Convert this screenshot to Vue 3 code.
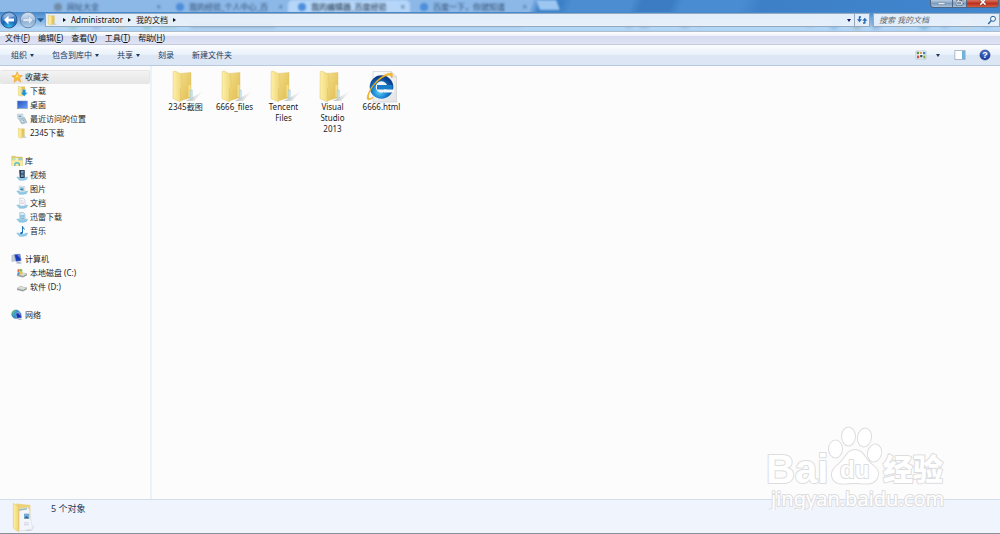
<script setup>
import { ref } from 'vue'

const keyword = ref('')

const tabs = [
  { title: '网址大全', tone: 'gray' },
  { title: '我的经验_个人中心_百', tone: 'blue' },
  { title: '我的编辑器_百度经验', tone: 'blue', active: true },
  { title: '百度一下，你就知道', tone: 'blue' }
]
const menus = [
  { text: '文件', key: 'F' },
  { text: '编辑', key: 'E' },
  { text: '查看', key: 'V' },
  { text: '工具', key: 'T' },
  { text: '帮助', key: 'H' }
]
const commands = [
  { text: '组织', drop: true },
  { text: '包含到库中', drop: true },
  { text: '共享', drop: true },
  { text: '刻录' },
  { text: '新建文件夹' }
]
const groups = [
  {
    name: '收藏夹', icon: 'star', selected: true,
    items: [
      { name: '下载', icon: 'download' },
      { name: '桌面', icon: 'desktop' },
      { name: '最近访问的位置', icon: 'recent' },
      { name: '2345下载', icon: 'minifolder' }
    ]
  },
  {
    name: '库', icon: 'library',
    items: [
      { name: '视频', icon: 'video' },
      { name: '图片', icon: 'picture' },
      { name: '文档', icon: 'document' },
      { name: '迅雷下载', icon: 'thunder' },
      { name: '音乐', icon: 'music' }
    ]
  },
  {
    name: '计算机', icon: 'computer',
    items: [
      { name: '本地磁盘 (C:)', icon: 'diskc' },
      { name: '软件 (D:)', icon: 'diskd' }
    ]
  },
  { name: '网络', icon: 'network', items: [] }
]
const files = [
  { name: '2345截图', icon: 'folder' },
  { name: '6666_files', icon: 'folder' },
  { name: 'Tencent Files', icon: 'folder' },
  { name: 'Visual Studio 2013', icon: 'folder' },
  { name: '6666.html', icon: 'ie' }
]
</script>

<template>
  <div class="window">
    <svg class="defs" aria-hidden="true">
      <defs>
        <linearGradient id="gFront" x1="0" x2="1"><stop offset="0" stop-color="#fdf0a9" /><stop offset="1" stop-color="#efd676" /></linearGradient>
        <linearGradient id="gBack" x1="0" x2="1" y2="1"><stop offset="0" stop-color="#f3dc88" /><stop offset="1" stop-color="#dfbd50" /></linearGradient>
        <linearGradient id="gShade" x1="0" x2="1"><stop offset="0" stop-color="#8d8d8d" stop-opacity=".6" /><stop offset="1" stop-color="#bbb" stop-opacity="0" /></linearGradient>
        <radialGradient id="gIe" cx=".4" cy=".75" r=".8"><stop offset="0" stop-color="#5fd3fb" /><stop offset=".5" stop-color="#1b86d3" /><stop offset="1" stop-color="#0b3f8e" /></radialGradient>
        <linearGradient id="gPage" x1="0" x2="1" y2="1"><stop offset="0" stop-color="#fff" /><stop offset="1" stop-color="#e2e2e6" /></linearGradient>
        <radialGradient id="gBackBtn" cx=".5" cy=".95" r=".9"><stop offset="0" stop-color="#37c3f5" /><stop offset=".5" stop-color="#1b63b5" /><stop offset="1" stop-color="#6f9fd8" /></radialGradient>
        <linearGradient id="gFwdBtn" x2="0" y2="1"><stop offset="0" stop-color="#d5e3f3" /><stop offset=".48" stop-color="#a9c4e2" /><stop offset=".52" stop-color="#86a9d0" /><stop offset="1" stop-color="#b7d2ed" /></linearGradient>
        <radialGradient id="gHelp" cx=".5" cy=".3" r=".7"><stop offset="0" stop-color="#5b83d8" /><stop offset="1" stop-color="#142f96" /></radialGradient>
        <linearGradient id="gScreen" x1="0" x2="1" y2="1"><stop offset="0" stop-color="#2450bd" /><stop offset="1" stop-color="#69a0f4" /></linearGradient>
      </defs>
      <symbol id="i-star" viewBox="0 0 12 12">
        <path d="M6.2.8 7.6 4.4 11.4 4.6 8.5 7 9.8 11 6.3 8.800 3 11.2 3.8 7.2.8 4.9 4.7 4.5Z" fill="#fcc12f" stroke="#ee9a2c" stroke-width=".6" />
        <path d="M6.1 2.4 6.9 5 9.2 5.1 5 6.2Z" fill="#ffe98b" />
      </symbol>
      <symbol id="i-minifolder" viewBox="0 0 12 12">
        <path d="M5 1.6h3.6v8.8H4.5Z" fill="#e2c464" />
        <path d="M2.4 1 5.8 2.6V11.4L2.4 10.2Z" fill="#fae896" stroke="#e3c863" stroke-width=".4" />
        <path d="M8.5 9 11 10.8H6Z" fill="#c8c8c8" />
        <path d="M7.7 8.1h1v2.4h-1z" fill="#bcd4e3" />
      </symbol>
      <symbol id="i-download" viewBox="0 0 12 12">
        <path d="M5 1.6h4v8.8H4.5Z" fill="#e2c464" />
        <path d="M2.4 1 5.8 2.6V11.4L2.4 10.2Z" fill="#fae896" stroke="#e3c863" stroke-width=".4" />
        <path d="M6.600 4.800h3v3h1.800L8.200 11.300 5 7.800H6.600Z" fill="#1993d8" stroke="#86c9ea" stroke-width=".3" />
      </symbol>
      <symbol id="i-desktop" viewBox="0 0 12 12">
        <path d="M1.4 2h10v7.500h-10z" fill="url(#gScreen)" stroke="#7697d4" stroke-width=".6" />
        <path d="M1.400 9h10v1h-10z" fill="#a0afc6" /><path d="M1.600 9h1v.8h-1z" fill="#438661" />
      </symbol>
      <symbol id="i-recent" viewBox="0 0 12 12">
        <path d="M1.4 1.4 6.7 1 7 5.5 2 6Z" fill="#e9f0f5" stroke="#91a6b5" stroke-width=".5" />
        <path d="M2.5 2.5h3v1.8h-3z" fill="#6f9fc6" />
        <path d="M3 6.2 8.4 4.2 11 9.5 5.8 11Z" fill="#c9dbe5" stroke="#8da2b0" stroke-width=".5" />
        <circle cx="7" cy="7.8" r="2" fill="#eff8fb" stroke="#5c8498" stroke-width=".5" /><path d="M7 6.4V8h1.2" fill="none" stroke="#234d70" stroke-width=".5" />
      </symbol>
      <symbol id="i-library" viewBox="0 0 12 12">
        <path d="M.8 1.2H4L5 2.1h6.4v8.5H.8Z" fill="#e3c65e" stroke="#cdb157" stroke-width=".4" />
        <path d="M1.5 2.6h3v4h-3z" fill="#bce6b1" /><path d="M4.5 3h3v4h-3z" fill="#eff6cc" /><path d="M7.5 3.2h3v3h-3z" fill="#8cd1dc" />
        <path d="M.7 5.400h10.800v5.500H.7Z" fill="#faed9e" />
        <path d="M3.2 11V8.500Q3.500 7 6 7T9 8.500V11H7.600V9Q6 8 4.600 9V11Z" fill="#61b9d1" />
      </symbol>
      <symbol id="i-tray" viewBox="0 0 12 12">
        <path d="M.8 8.100Q3 7.600 4.200 9.200H8Q9.200 7.800 11.600 8.300L10.400 10.500 7.700 11.300H3.500Z" fill="#8fcdea" stroke="#5fa7cc" stroke-width=".4" />
      </symbol>
      <symbol id="i-video" viewBox="0 0 12 12">
        <use href="#i-tray" /><path d="M3 1h5.800v8h-5z" fill="#28364b" /><path d="M5 1.8h2.6v2.6H5zM5 5.4h2.6V8H5z" fill="#639ac7" />
        <path d="M3.800 1v8M8.3 1v8" stroke="#b5c0cc" stroke-width=".5" stroke-dasharray=".7 .7" />
      </symbol>
      <symbol id="i-picture" viewBox="0 0 12 12">
        <use href="#i-tray" /><path d="M3.3 3 9 3.6 8.7 8.8 2.9 8.2Z" fill="#f4f9fa" stroke="#a6bdcb" stroke-width=".5" />
        <path d="M4 4.1 8 4.4 7.8 7.8 3.7 7.3Z" fill="#8cc3df" /><path d="m4 7.1 1.6-1.8 2.2 2.3Z" fill="#477890" />
      </symbol>
      <symbol id="i-document" viewBox="0 0 12 12">
        <use href="#i-tray" /><path d="M3.7 1.2h3.7L9 3v6H3.7Z" fill="#fafafd" stroke="#a9b3c6" stroke-width=".5" />
        <path d="M4.7 3.5h2M4.7 5h3.2M4.7 6.5h3.2" stroke="#aab7cf" stroke-width=".5" />
      </symbol>
      <symbol id="i-thunder" viewBox="0 0 12 12">
        <use href="#i-tray" /><path d="M3.7 1.5h3.5L9 3v6H3.7Z" fill="#d4e9f4" stroke="#85abc6" stroke-width=".5" />
        <path d="M4.4 4h3.9v4.3H4.4z" fill="#77b9dc" /><path d="M5 5h2.7M5 6.5h2.7" stroke="#e7f5fb" stroke-width=".5" />
      </symbol>
      <symbol id="i-music" viewBox="0 0 12 12">
        <use href="#i-tray" /><path d="M6 1.2h1q.3 1.5 2 3-.6 1-1-.1L7 3.6v4.2Q6.7 9.3 5 9.2 3.5 8.7 4.2 7.6 5 6.8 6 7.1Z" fill="#1271c2" />
      </symbol>
      <symbol id="i-computer" viewBox="0 0 12 12">
        <path d="M.9 2.4 3.5 1.6V8L.9 8.5Z" fill="#c6ced7" stroke="#8d9dad" stroke-width=".4" />
        <path d="M3.5 1.4 9 1.1 10.2 7.7 4.8 8.4Z" fill="#183bbd" stroke="#8c9cc3" stroke-width=".5" />
        <path d="M6 1.4 9 1.2 8.7 5Z" fill="#798edc" />
        <path d="m6 8.7 3-.3.2 1.1 2.1.2-1.8 1.1-4.2-.4Z" fill="#adb6c2" />
      </symbol>
      <symbol id="i-diskbase" viewBox="0 0 12 12">
        <path d="M1 7.3 4.4 5.3 11 6.7v1.6L7.1 10.4 1 8.9Z" fill="#9b9f9f" />
        <path d="M1 7.3 4.4 5.3 11 6.7 7.2 8.9Z" fill="#dedfdb" stroke="#a9adab" stroke-width=".3" /><circle cx="8.9" cy="8.5" r=".6" fill="#53bd66" />
      </symbol>
      <symbol id="i-diskd" viewBox="0 0 12 12"><use href="#i-diskbase" /></symbol>
      <symbol id="i-diskc" viewBox="0 0 12 12">
        <use href="#i-diskbase" />
        <path d="M1.5 2.5 3.6 2v2.7l-2.1.4Z" fill="#e1623a" /><path d="m4 2 2.3.5v2.3L4 4.6Z" fill="#76b646" />
        <path d="m1.5 5.5 2.1-.4v2.4l-2.1.4Z" fill="#408fd3" /><path d="m4 5 2.3.1v2.5L4 7.5Z" fill="#efc43d" />
      </symbol>
      <symbol id="i-network" viewBox="0 0 12 12">
        <circle cx="5" cy="5.2" r="4.3" fill="#3494cb" stroke="#286c9d" stroke-width=".4" />
        <path d="M1.3 4Q2.4.8 5.2 1.3L4.3 3.2 2.6 4 3.2 7Q1 6.6 1.3 4Z" fill="#5fbd72" />
        <path d="m4.7 4.2 5.2-.4.9 5-5 .6Z" fill="#1735ae" stroke="#c0cadf" stroke-width=".5" />
        <path d="m7.2 4.3 2.3-.2.1 3Z" fill="#8298df" /><path d="m6.5 10 3.3-.5 1.5 1-3 .6Z" fill="#a6b1bf" />
      </symbol>
      <symbol id="i-folder" viewBox="0 0 36 34">
        <path d="M18 31 36 20.500 26 31Z" fill="url(#gShade)" />
        <path d="M12 3.400 23 2.500 23 27.500 12 31Z" fill="url(#gBack)" stroke="#dcc165" stroke-width=".4" />
        <path d="M20.5 15h2.1v12h-2.1z" fill="#f4e18b" />
        <path d="M5.2 1.5 7 1 13.7 4.5 14 17 12.4 18.5V31.8L5 28.6Z" fill="url(#gFront)" stroke="#e0c566" stroke-width=".5" />
        <path d="M22.3 20h2v8.500l-2 .5z" fill="#cfe5ee" stroke="#8eb8ca" stroke-width=".4" />
      </symbol>
      <symbol id="i-ie" viewBox="0 0 36 34">
        <path d="M9 1.500h18l5.500 5.500V32H9Z" fill="url(#gPage)" stroke="#c7c7cb" stroke-width=".6" />
        <path d="M27 1.500v5.500h5.500Z" fill="#ededf0" stroke="#c1c1c5" stroke-width=".5" />
        <circle cx="17.500" cy="17" r="8.800" fill="none" stroke="url(#gIe)" stroke-width="6" />
        <path d="M13 15h15.500v4.500H13Z" fill="#197cc9" /><path d="M20 19.500H30v3H20Z" fill="#f6f6f7" />
        <path d="M5.500 29.500Q2.500 31 3.500 25.500 6 17.500 13.500 10 22 2.500 27.500 3.200 29.300 4 27.800 8 27.600 5 25 5 18 6 9.500 15.500 3.500 24 4.600 28.300 5.500 29.500 9 27.500 7 29.300 5.500 29.500Z" fill="#f8ba20" stroke="#e9a21b" stroke-width=".6" />
      </symbol>
    </svg>

    <header class="glass">
      <div class="backdrop" aria-hidden="true">
        <div class="tabs">
          <div v-for="t in tabs" :key="t.title" class="tab" :class="{ active: t.active }">
            <i class="dot" :class="t.tone"></i><span class="tabname">{{ t.title }}</span><b>×</b>
          </div>
          <i class="newtab"></i>
        </div>
      </div>
      <svg class="haze left" viewBox="0 0 700 20" aria-hidden="true">
        <circle cx="73" cy="14" r="4" fill="#68ba91" /><circle cx="96" cy="14" r="4" fill="#938fdc" />
        <circle cx="121" cy="14" r="4" fill="#d9bd85" /><circle cx="147" cy="14" r="4" fill="#5fb990" />
        <path d="M160 14h17" stroke="#6fb793" stroke-width="4" /><path d="M191 14h84" stroke="#56697c" stroke-width="4" stroke-dasharray="4 1" />
        <path d="M277 14h244" stroke="#8da5bd" stroke-width="3" stroke-dasharray="5 2" />
        <path d="M626 14h6m8 0h9m32 0h8m10 0h55" stroke="#798ea5" stroke-width="4" />
      </svg>
      <svg class="haze right" viewBox="0 0 200 20" aria-hidden="true">
        <circle cx="10" cy="13" r="4" fill="#9cbcd7" /><circle cx="34" cy="13" r="5" fill="#65a4d8" /><circle cx="57" cy="13" r="5" fill="#8e9b8b" />
        <circle cx="76" cy="13" r="5" fill="#6a8bc0" /><path d="m98 16 9-8" stroke="#e2b779" stroke-width="3" /><circle cx="124" cy="13" r="5" fill="#4696bb" />
        <circle cx="145" cy="12" r="5" fill="#83a9de" /><circle cx="166" cy="12" r="5" fill="#dfcd9e" /><circle cx="187" cy="13" r="4" fill="#78b3e5" />
      </svg>
      <div class="winbuttons">
        <button aria-label="最小化"><svg viewBox="0 0 22 8"><path d="M7 3.2h8v2H7z" fill="#fff" stroke="#4f6278" stroke-width=".5" /></svg></button>
        <button aria-label="还原"><svg viewBox="0 0 14 8"><path d="M4 1.500h5v4H4zM6 1.300V-.5h5v4H9" fill="none" stroke="#465a72" stroke-width="2" /><path d="M4 1.500h5v4H4zM6 1.300V-.5h5v4H9" fill="none" stroke="#fff" /></svg></button>
        <button class="close" aria-label="关闭"><svg viewBox="0 0 30 8"><path d="m12.500-1 6 6.500m0-6.500-6 6.500" stroke="#733" stroke-width="3" /><path d="m12.500-1 6 6.500m0-6.500-6 6.500" stroke="#fff" stroke-width="1.800" /></svg></button>
      </div>
      <div class="address-row">
        <div class="nav">
          <button aria-label="后退"><svg viewBox="0 0 18 18"><circle cx="9" cy="9" r="8" fill="url(#gBackBtn)" stroke="#315b91" /><path d="M3.5 5Q9-.3 14.5 5 9 8 3.5 9Z" fill="#fff" opacity=".35" /><path d="M4 9 8.5 4.5v3H14v3H8.5v3Z" fill="#fff" /></svg></button>
          <button aria-label="前进"><svg viewBox="0 0 18 18"><circle cx="9" cy="9" r="7.8" fill="url(#gFwdBtn)" stroke="#6d88ac" /><path d="M14 9 9.5 4.5v3H4v3h5.5v3Z" fill="#dce7f3" stroke="#91abc9" stroke-width=".5" /></svg></button>
          <button class="history" aria-label="最近浏览的位置"><svg viewBox="0 0 6 6"><path d="M0 1h6L3 4.5Z" fill="#1d5d9a" /></svg></button>
        </div>
        <div class="address">
          <svg class="ico"><use href="#i-minifolder" /></svg>
          <i class="sep"></i><a href="#admin">Administrator</a>
          <i class="sep"></i><a href="#docs">我的文档</a>
          <i class="sep"></i>
          <button class="drop" aria-label="以前的位置"><i class="tri"></i></button>
          <button class="refresh" aria-label="刷新"><svg viewBox="0 0 12 12"><path d="M5 3H3.500v3M7 9H8.800V6" fill="none" stroke="#276bb7" stroke-width="1.400" /><path d="M1 5.300h5L3.500 8.300ZM6.300 6.700h5L8.800 3.700Z" fill="#276bb7" /></svg></button>
        </div>
        <label class="search">
          <input v-model="keyword" type="text" placeholder="搜索 我的文档" aria-label="搜索 我的文档">
          <svg viewBox="0 0 10 10"><circle cx="6" cy="3.8" r="2.5" fill="#edf8ff" stroke="#2c629f" /><path d="M4.2 5.6 1.2 9" stroke="#2c629f" stroke-width="1.4" /></svg>
        </label>
      </div>
    </header>

    <nav class="menubar">
      <button v-for="m in menus" :key="m.key">{{ m.text }}(<u>{{ m.key }}</u>)</button>
    </nav>

    <div class="toolbar">
      <button v-for="c in commands" :key="c.text">{{ c.text }}<i v-if="c.drop" class="tri"></i></button>
      <div class="tools">
        <button aria-label="更改视图">
          <svg viewBox="0 0 12 12"><path d="M1 2h10v8H1z" fill="#f5f9f8" stroke="#99a9ba" stroke-width=".5" /><path d="M1.8 2.8h2.4v2.4H1.8z" fill="#658f62" /><path d="M5 3h2v2H5z" fill="#dba338" /><path d="M8 3h2.3v2.3H8z" fill="#4084bb" /><path d="M2 6.5h2.3v2.7H2z" fill="#cd513d" /><path d="M5.2 6h2.2v2.3H5.2z" fill="#304961" /><path d="M8.3 6.5h2v2.8h-2z" fill="#7ba43c" /></svg>
        </button>
        <button class="more" aria-label="更多选项"><i class="tri"></i></button>
        <button aria-label="显示预览窗格">
          <svg viewBox="0 0 12 12"><path d="M.8 1.5h10.4v9H.8z" fill="#fff" stroke="#7890aa" stroke-width=".6" /><path d="M8 2h3v8H8z" fill="#70b4d5" /></svg>
        </button>
        <button aria-label="帮助">
          <svg viewBox="0 0 12 12"><circle cx="6" cy="6" r="5.1" fill="url(#gHelp)" stroke="#263c80" stroke-width=".5" /><text x="6" y="9" class="question">?</text></svg>
        </button>
      </div>
    </div>

    <main class="body">
      <aside class="side">
        <ul v-for="g in groups" :key="g.name">
          <li><a href="#group" class="head" :class="{ selected: g.selected }"><svg class="ico"><use :href="'#i-' + g.icon" /></svg>{{ g.name }}</a></li>
          <li v-for="n in g.items" :key="n.name"><a href="#item"><svg class="ico"><use :href="'#i-' + n.icon" /></svg>{{ n.name }}</a></li>
        </ul>
      </aside>
      <section class="files">
        <a v-for="f in files" :key="f.name" href="#file" class="file">
          <svg><use :href="'#i-' + f.icon" /></svg>
          <span>{{ f.name }}</span>
        </a>
      </section>
    </main>

    <footer class="status">
      <svg viewBox="0 0 26 32">
        <path d="M14 30 26 23 21 30Z" fill="url(#gShade)" />
        <path d="M5 1.500 19.500 3V27L7 28Z" fill="#edd279" />
        <path d="M8 7 17 5.500 19 9V12L22 28 8 30Z" fill="#f3f5fb" stroke="#c4cedb" stroke-width=".4" />
        <path d="M8 7.500 16 6.300v1.400L8 9z" fill="#9cb9b2" />
        <path d="M13 12h5.500v5h-5.500z" fill="#73acd2" /><path d="m13 17 2.500-2.500 3 2.500Z" fill="#36628a" /><path d="M13 21.500h5M13 23.500h5" stroke="#cfcee6" />
        <path d="M2 1.500 7.400 4.200V30.600L2 27Z" fill="url(#gFront)" stroke="#dfbd55" stroke-width=".5" />
      </svg>
      <span>5 个对象</span>
    </footer>

    <svg class="watermark" viewBox="0 0 190 90" aria-hidden="true">
      <g class="outline">
        <text x="6" y="63" class="brand">Bai</text>
        <ellipse cx="75.500" cy="29" rx="6.500" ry="8.500" /><ellipse cx="88.500" cy="16.500" rx="6.500" ry="9" />
        <ellipse cx="104.500" cy="17.500" rx="6.500" ry="9" transform="rotate(10 104.500 17.500)" /><ellipse cx="114.500" cy="33" rx="6.500" ry="8.500" transform="rotate(15 114.500 33)" />
        <path d="M95 30C103 30 105 39 111 44 117 48 120 52 117 58 113 66 103 63 95 63S77 66 73 59C70 52 74 48 79 44 85 39 87 30 95 30Z" />
        <text x="80" y="58" class="du">du</text>
        <text x="123" y="60" class="cn">经验</text>
        <text x="11" y="86" class="url">jingyan.baidu.com</text>
      </g>
    </svg>
  </div>
</template>

<style>
html, body { height: 100%; }
#app { min-height: 100%; display: flex; }
</style>

<style scoped>
* { box-sizing: border-box; }
.window {
  position: relative; flex: 1; min-width: 0; min-height: 100vh; display: flex; flex-direction: column; overflow: hidden;
  background: #fcfcfc; color: #1d1d1d; font: 8px/14px "Noto Sans", "Noto Sans CJK SC", sans-serif;
}
.defs { position: absolute; width: 0; height: 0; }
button { border: 0; margin: 0; padding: 0; background: none; color: inherit; font: inherit; display: flex; align-items: center; }
a { color: inherit; text-decoration: none; }
ul { list-style: none; margin: 0; padding: 0; }
.ico { width: 12px; height: 12px; flex: none; }
.tri { border: 2px solid transparent; border-top: 3px solid currentColor; border-bottom: 0; width: 0; height: 0; }

.glass {
  position: relative; height: 32px; padding-top: 12px; border-bottom: 1px solid #b3bcc8;
  background: linear-gradient(#4286cb 0 12px, #b8d8f5 28px, #a9d4fa);
}
.backdrop {
  position: absolute; inset: 0 0 19px; overflow: hidden;
  background: linear-gradient(110deg, #8cb8e8 0 53%, #3b7fc6 54% 56%, #4c8dd1 57% 63%, #3b7cc2 64% 67%, #4a8cd2 68% 74%, #3d80c8 76%, #4186ce);
}
.tabs { display: flex; padding-left: 44px; filter: blur(1px); color: #2f4c6d; line-height: 12px; }
.tab { width: 122px; height: 13px; display: flex; align-items: center; gap: 5px; padding: 0 5px 0 10px; flex: none; }
.tab.active { background: #b5d6f8; border-radius: 5px 5px 0 0; color: #16263a; }
.tabname { flex: 1; white-space: nowrap; }
.tab b { color: #54789f; }
.dot { width: 8px; height: 8px; border-radius: 50%; background: #4d8dda; flex: none; }
.dot.gray { background: #728ca8; }
.newtab { width: 20px; height: 10px; margin-left: 6px; background: #9dc7f1; transform: skewX(20deg); }
.haze { position: absolute; bottom: 0; height: 20px; filter: blur(2px); opacity: .6; }
.haze.left { left: 0; width: 700px; }
.haze.right { right: 0; width: 200px; }
.winbuttons { position: absolute; top: 0; right: 1px; display: flex; border: 1px solid #52667f; border-top: 0; border-radius: 0 0 4px 4px; overflow: hidden; }
.winbuttons button { width: 22px; height: 7px; background: linear-gradient(#b6cbe1, #7c9dbf 50%, #a5c3df); border-right: 1px solid #52667f; }
.winbuttons button:nth-child(2) { width: 14px; }
.winbuttons .close { width: 31px; border: 0; background: linear-gradient(#d8735f, #bc301e 50%, #d25e43); }
.winbuttons svg { width: 100%; height: 7px; }
.address-row { position: relative; display: flex; align-items: center; height: 16px; }
.nav { display: flex; align-items: center; width: 45px; flex: none; }
.nav svg { width: 18px; height: 18px; }
.nav .history svg { width: 7px; height: 7px; }
.nav button:first-child { margin-right: 1px; }
.nav .history { margin-left: 0; }
.address, .search { display: flex; align-items: center; height: 14px; border: 1px solid #94a9bf; background: linear-gradient(#e8f2fcf5, #f0f6fde0); }
.address { flex: 1; min-width: 0; line-height: 12px; color: #111; }
.sep { border: 2px solid transparent; border-left: 3px solid #111; border-right: 0; margin: 0 5px; }
.drop { margin-left: auto; width: 10px; height: 100%; justify-content: center; color: #17175e; }
.refresh { width: 15px; height: 100%; justify-content: center; border-left: 1px solid #94a9bf; }
.refresh svg { width: 12px; height: 12px; }
.search { width: 127px; margin-left: 3px; padding: 0 2px 0 5px; flex: none; }
.search input { flex: 1; min-width: 0; height: 12px; border: 0; padding: 0; background: none; font: inherit; color: #222; outline: none; }
.search input::placeholder { color: #5f6871; font-style: italic; opacity: 1; }
.search svg { width: 10px; height: 10px; }

.menubar {
  display: flex; gap: 8px; height: 13px; padding-left: 5px; border-bottom: 1px solid #c4cadb; color: #111;
  background: linear-gradient(#fff, #edf0f8 4px, #d5daee 4px, #dfe3f5);
}
.menubar u { text-underline-offset: 1px; }
.toolbar {
  display: flex; gap: 18px; height: 21px; padding: 0 9px 0 11px; border-bottom: 1px solid #b9c9df; color: #1e395b;
  background: linear-gradient(#fcfdff, #e7f0fa 10px, #dce6f4 10px, #dce7f5);
}
.toolbar .tri { margin-left: 3px; }
.tools { margin-left: auto; display: flex; gap: 13px; }
.tools svg { width: 12px; height: 12px; }
.tools .more { margin: 0 1px 0 -7px; }
.question { font: bold 9px "Liberation Sans", sans-serif; fill: #fff; text-anchor: middle; }

.body { flex: 1; display: flex; min-height: 0; }
.side { width: 152px; flex: none; border-right: 2px solid #ecf2f9; padding-top: 4px; display: flex; flex-direction: column; gap: 14px; }
.side a { display: flex; align-items: center; height: 14px; gap: 2px; padding-left: 16px; white-space: nowrap; }
.side .head { padding-left: 11px; }
.side .selected { background: linear-gradient(#f3f3f3, #e6e6e6); border: 1px solid #e6e6e6; border-left: 0; border-radius: 2px; }
.files { flex: 1; display: flex; flex-wrap: wrap; align-content: flex-start; padding: 4px 0 0 9px; }
.file { width: 49px; display: flex; flex-direction: column; align-items: center; line-height: 11px; text-align: center; }
.file svg { width: 36px; height: 34px; margin-bottom: -3px; }
.file span { width: 40px; }

.status {
  display: flex; align-items: flex-start; gap: 14px; height: 35px; padding: 2px 0 0 11px; font-size: 9px;
  background: #f0f4fc; border-top: 1px solid #d3deec; border-bottom: 1px solid #89909b; color: #1e395b;
}
.status svg { width: 26px; height: 31px; }
.watermark { position: absolute; right: 50px; bottom: 24px; width: 190px; height: 90px; pointer-events: none; }
.outline { fill: #fff; stroke: #dddde0; stroke-width: 2px; paint-order: stroke; stroke-linejoin: round; }
.brand { font: bold 40px "Liberation Sans", sans-serif; }
.du { font: bold 24px "Liberation Sans", sans-serif; }
.cn { font: 900 30px "Noto Sans CJK SC", sans-serif; }
.url { font: 20px "Noto Sans", sans-serif; }
</style>
